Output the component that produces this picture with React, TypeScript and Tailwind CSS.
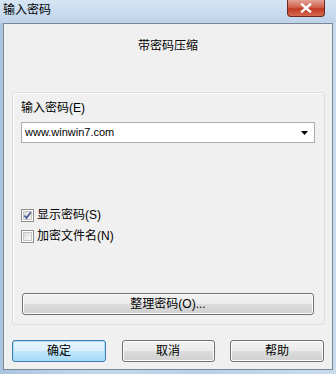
import React from "react";

const F = { fontFamily: '"Liberation Sans", "Noto Sans CJK SC", sans-serif' };

function Checkbox({ checked, label }: { checked?: boolean; label: string }) {
  return (
    <div className="flex items-center h-[13px] gap-[3px]">
      <div className="w-[13px] h-[13px] border border-[#8e8f8f] bg-white p-[1px]">
        <div className="w-full h-full bg-gradient-to-br from-[#dcdcdc] to-[#f8f8f8] border border-[#c6c6c6] relative">
          {checked && (
            <svg viewBox="0 0 9 9" className="absolute w-[9px] h-[9px]" style={{ left: -1, top: -1 }}>
              <path d="M1.5 4.5 L3.5 7 L7.8 1.2" fill="none" stroke="#4a5f97" strokeWidth="1.8" />
            </svg>
          )}
        </div>
      </div>
      <span className="text-[12px] leading-[13px] text-black">{label}</span>
    </div>
  );
}

function Button({ label, def, className }: { label: string; def?: boolean; className?: string }) {
  return (
    <div
      className={
        "h-[22px] rounded-[3px] border flex items-center justify-center text-[12px] text-black " +
        (def
          ? "border-[#3c7fb1] bg-[linear-gradient(#eaf6fd_0%,#d9f0fc_50%,#bee6fd_51%,#a7d9f5_100%)] shadow-[inset_0_0_0_1px_#a8dcf7] "
          : "border-[#707070] bg-[linear-gradient(#f2f2f2_0%,#ebebeb_50%,#dddddd_51%,#cfcfcf_100%)] shadow-[inset_0_0_0_1px_#fcfcfc] ") +
        (className ?? "")
      }
    >
      {label}
    </div>
  );
}

export default function App() {
  return (
    <div
      style={F}
      className="w-[336px] h-[374px] flex flex-col bg-[linear-gradient(90deg,#a9c4df,#c4d8ec_30%,#b8cfe6_60%,#c9dcee)] overflow-hidden"
    >
      {/* title bar */}
      <div className="h-[23px] flex items-start justify-between bg-[linear-gradient(180deg,#d6e5f3,#bdd3ea)]">
        <div className="pl-[3px] pt-[3px] text-[12px] leading-[14px] text-black">输入密码</div>
        <div className="mr-[11px] w-[38px] h-[17px] rounded-b-[4px] border border-t-0 border-[#6d2a21] bg-[linear-gradient(180deg,#e5a294_0%,#d0624f_45%,#c03a24_55%,#d66a4f_100%)] flex items-center justify-center">
          <svg viewBox="0 0 12 10" className="w-[12px] h-[10px]">
            <path d="M2 1.5 L10 8.5 M10 1.5 L2 8.5" stroke="#ffffff" strokeWidth="2.4" strokeLinecap="square" />
          </svg>
        </div>
      </div>
      {/* client */}
      <div className="mx-[3px] mb-[4px] flex-1 border border-[#7b8795] bg-[#f0f0f0] flex flex-col">
        <div className="pt-[14px] text-center text-[12px] leading-[16px] text-black">带密码压缩</div>
        <div className="mt-[38px] ml-[8px] mr-[7px] h-[233px] rounded-[3px] border border-[#d5dfe5] shadow-[inset_1px_1px_0_#ffffff] px-[8px] pt-[8px] flex flex-col">
          <div className="text-[12px] leading-[14px] text-black">输入密码(E)</div>
          <div className="mt-[7px] h-[21px] mr-[1px] border border-[#abadb3] bg-white flex items-center justify-between pl-[3px] pr-[6px]">
            <span className="text-[11px] text-black">www.winwin7.com</span>
            <svg viewBox="0 0 7 4" className="w-[7px] h-[4px]">
              <path d="M0 0 H7 L3.5 4 Z" fill="#000" />
            </svg>
          </div>
          <div className="mt-[66px] flex flex-col gap-[8px]">
            <Checkbox checked label="显示密码(S)" />
            <Checkbox label="加密文件名(N)" />
          </div>
          <Button label="整理密码(O)..." className="mt-[50px] ml-[1px] mr-[2px] h-[21px]" />
        </div>
        <div className="mt-[15px] px-[8px] flex justify-between">
          <Button def label="确定" className="w-[94px]" />
          <Button label="取消" className="w-[93px]" />
          <Button label="帮助" className="w-[94px]" />
        </div>
      </div>
    </div>
  );
}
